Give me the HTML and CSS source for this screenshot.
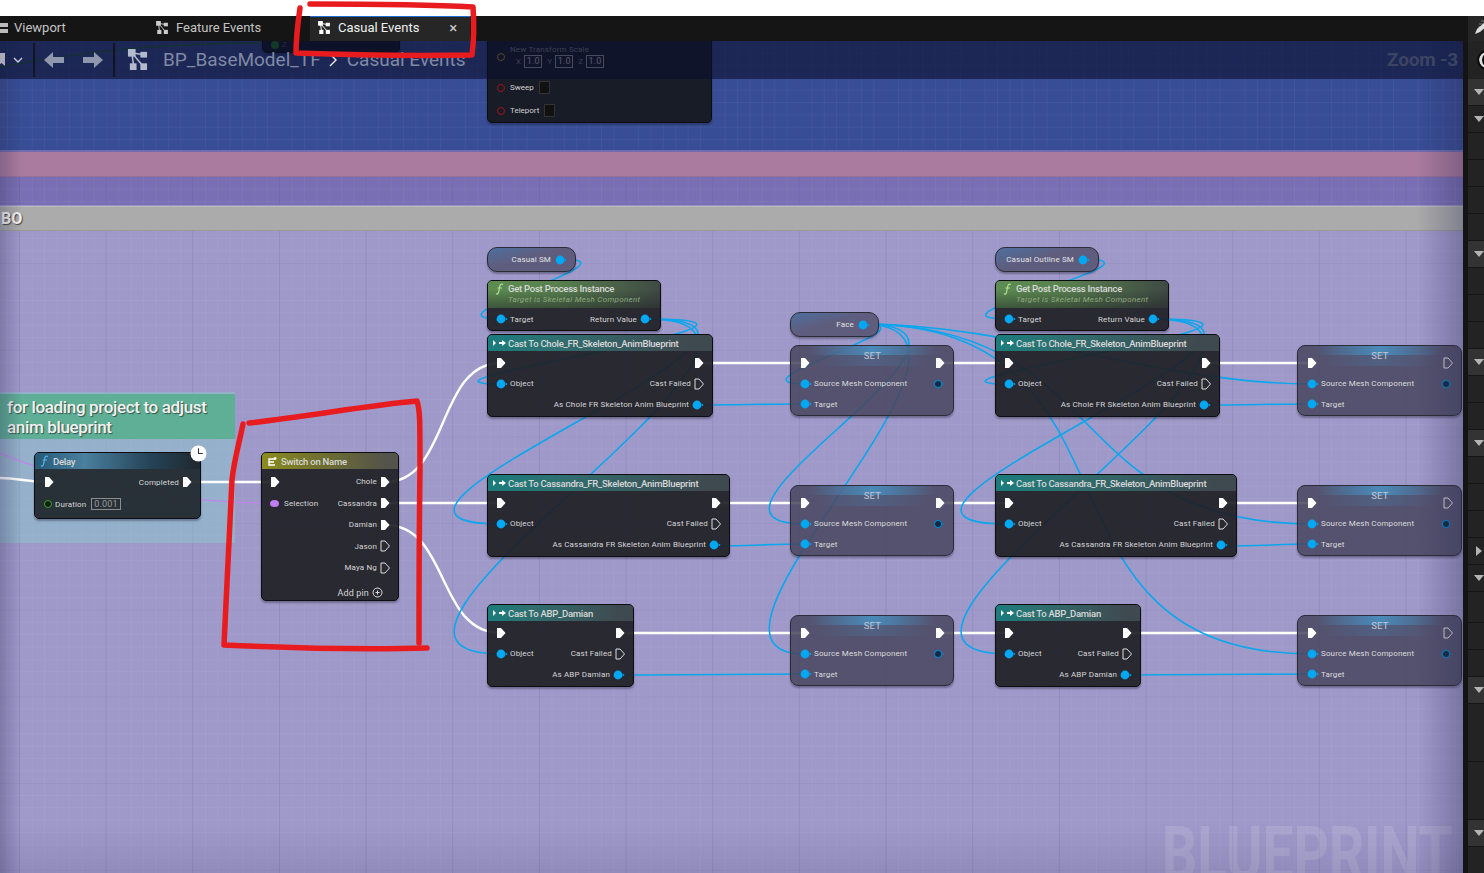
FILE: index.html
```html
<!DOCTYPE html>
<html>
<head>
    <title>BP_BaseModel_TF - Casual Events</title>
    <link rel="stylesheet" href="styles.css">
</head>
<body>
    <svg class="defs" width="0" height="0">
        <symbol id="exec" viewBox="0 0 10 12"><path d="M1 1H5L9.5 6L5 11H1Z" fill="#fff"/></symbol>
        <symbol id="exec-off" viewBox="0 0 10 12"><path d="M1 1H5L9.5 6L5 11H1Z" fill="none" stroke="#ddd" stroke-width="1"/></symbol>
        <symbol id="obj" viewBox="0 0 12 10"><circle cx="5" cy="5" r="4.4" fill="#00a8f4"/><path d="M9.6 3.6L11.6 5L9.6 6.4Z" fill="#00a8f4"/></symbol>
        <symbol id="obj-off" viewBox="0 0 12 10"><circle cx="5" cy="5" r="3.6" fill="#142a44" stroke="#0a80c0" stroke-width="1.2"/><path d="M9.6 3.8L11.4 5L9.6 6.2Z" fill="#0a80c0"/></symbol>
        <symbol id="graph" viewBox="0 0 22 22"><path d="M5 4L17 6M5 4L7 18M5 4L17 18" stroke="currentColor" stroke-width="1.6" fill="none"/><rect x="1" y="0" width="8" height="8" fill="currentColor"/><rect x="14" y="3" width="7" height="6" fill="currentColor"/><rect x="3" y="15" width="7" height="7" fill="currentColor"/><rect x="14" y="15" width="7" height="7" fill="currentColor"/></symbol>
        <symbol id="cast" viewBox="0 0 14 8"><path d="M0 1L3 4L0 7Z M6 3H9V1L13 4L9 7V5H6Z" fill="#fff"/></symbol>
        <symbol id="func" viewBox="0 0 10 12"><path d="M8 1.5C5.5 0.5 5 2 4.6 4L3.6 9C3.2 11 2.4 11.5 1 10.6M2.5 5H7" fill="none" stroke="currentColor" stroke-width="1.2"/></symbol>
    </svg>

    <div class="topstrip"></div>

    <div class="tabbar">
        <div class="tab tab-viewport">
            <svg class="tab-icon-view" width="8" height="12" viewBox="0 0 8 12"><rect y="1" width="8" height="4" fill="#bbb"/><rect y="7" width="8" height="4" fill="#bbb"/></svg>
            Viewport
        </div>
        <div class="tab tab-feature">
            <svg class="tab-icon"><use href="#graph"/></svg>
            Feature Events
        </div>
        <div class="tab tab-active">
            <svg class="tab-icon"><use href="#graph"/></svg>
            Casual Events
            <span class="tab-close">×</span>
        </div>
        <div class="tab-side">
            <svg width="16" height="15" viewBox="0 0 16 15"><path d="M5 4H16M7 1H16M4 7H10" stroke="#777" stroke-width="1"/><path d="M1 14L3 9L11 2L14 5L6 12Z" fill="#ddd"/></svg>
        </div>
    </div>

    <div class="main">
        <div class="graph">
            <div class="band band-blue gridded"></div>
            <div class="band band-pink"></div>
            <div class="band band-purple gridded"></div>
            <div class="band band-gray"><span class="band-label">BO</span></div>
            <div class="band band-lav gridded"></div>

            <div class="canvas">
                <div class="comment">
                    <div class="comment-head">for loading project to adjust anim blueprint</div>
                </div>

                <svg class="wires" width="1463" height="873" viewBox="0 0 1463 873">
                    <path class="w-green" d="M0 67C90 50 170 43 273 43"/>
                    <path class="w-purple" d="M0 453C70 482 170 503 274 503"/>

                    <g class="w-exec">
                        <path d="M0 478C18 478 28 482 45 482"/>
                        <path d="M187 482H274"/>
                        <path d="M385 482C450 482 436 363 501 363"/>
                        <path d="M385 503H501"/>
                        <path d="M385 525C450 525 436 633 501 633"/>
                        <path d="M699 363H805"/>
                        <path d="M939 363H1008"/>
                        <path d="M1207 363H1312"/>
                        <path d="M716 503H805"/>
                        <path d="M939 503H1008"/>
                        <path d="M1224 503H1312"/>
                        <path d="M620 633H805"/>
                        <path d="M939 633H1008"/>
                        <path d="M1128 633H1312"/>
                    </g>

                    <g class="w-obj">
                        <path d="M561 259C648 259 414 319 501 319"/>
                        <path d="M1082 259C1182 259 908 319 1008 319"/>

                        <path d="M647 319C847 319 371 384 501 384"/>
                        <path d="M647 319C867 319 291 524 501 524"/>
                        <path d="M647 319C867 319 291 654 501 654"/>

                        <path d="M1153 319C1353 319 878 384 1008 384"/>
                        <path d="M1153 319C1373 319 798 524 1008 524"/>
                        <path d="M1153 319C1373 319 798 654 1008 654"/>

                        <path d="M862 324C945 324 722 384 805 384"/>
                        <path d="M862 324C1037 324 655 524 805 524"/>
                        <path d="M862 324C1037 324 655 654 805 654"/>
                        <path d="M862 324C1012 324 1162 384 1312 384"/>
                        <path d="M862 324C1112 324 1062 524 1312 524"/>
                        <path d="M862 324C1162 324 1012 654 1312 654"/>

                        <path d="M697 405C740 405 760 404 805 404"/>
                        <path d="M714 546C750 546 770 544 805 544"/>
                        <path d="M619 675C680 675 740 674 805 674"/>
                        <path d="M1205 405C1250 405 1270 404 1312 404"/>
                        <path d="M1222 546C1260 546 1280 544 1312 544"/>
                        <path d="M1126 675C1190 675 1250 674 1312 674"/>
                    </g>
                </svg>

                <div class="node hidden-z">
                    <div class="row"><span class="dot-green"></span><span class="dim-label">Z</span></div>
                </div>

                <div class="node transform">
                    <div class="tf-label">New Transform Scale</div>
                    <div class="row tf-vec">
                        <span class="ring ring-gold"></span>
                        <span class="tf-axis">X</span><span class="tf-box">1.0</span>
                        <span class="tf-axis">Y</span><span class="tf-box">1.0</span>
                        <span class="tf-axis">Z</span><span class="tf-box">1.0</span>
                    </div>
                    <div class="row tf-row"><span class="ring ring-red"></span>Sweep<span class="check"></span></div>
                    <div class="row tf-row"><span class="ring ring-red"></span>Teleport<span class="check"></span></div>
                </div>

                <!-- delay -->
                <div class="node n-delay">
                    <div class="head head-delay"><svg class="fn-icon fn-blue"><use href="#func"/></svg>Delay</div>
                    <div class="rows">
                        <div class="row"><svg class="exec"><use href="#exec"/></svg><span class="push">Completed</span><svg class="exec"><use href="#exec"/></svg></div>
                        <div class="row"><span class="ring ring-green"></span>Duration<span class="numbox">0.001</span></div>
                    </div>
                    <span class="clock"><svg width="17" height="17" viewBox="0 0 16 16"><circle cx="8" cy="8" r="7.5" fill="#fff"/><path d="M8 3V8H12" fill="none" stroke="#333" stroke-width="1"/></svg></span>
                </div>

                <!-- switch -->
                <div class="node n-switch">
                    <div class="head head-switch"><svg class="sw-icon" width="11" height="11" viewBox="0 0 11 11"><path d="M8 3H2V9H8M2 6H7M8 1V4M6.5 2.5H9.5" fill="none" stroke="#fff" stroke-width="1.4"/></svg>Switch on Name</div>
                    <div class="rows">
                        <div class="row"><svg class="exec"><use href="#exec"/></svg><span class="push">Chole</span><svg class="exec"><use href="#exec"/></svg></div>
                        <div class="row"><span class="dot-purple"></span>Selection<span class="push">Cassandra</span><svg class="exec"><use href="#exec"/></svg></div>
                        <div class="row"><span class="push">Damian</span><svg class="exec"><use href="#exec"/></svg></div>
                        <div class="row"><span class="push">Jason</span><svg class="exec"><use href="#exec-off"/></svg></div>
                        <div class="row"><span class="push">Maya Ng</span><svg class="exec"><use href="#exec-off"/></svg></div>
                        <div class="row add-row"><span class="push">Add pin</span><svg width="11" height="11" viewBox="0 0 11 11"><circle cx="5.5" cy="5.5" r="4.5" fill="none" stroke="#ddd"/><path d="M3.5 5.5H7.5M5.5 3.5V7.5" stroke="#ddd"/></svg></div>
                    </div>
                </div>

                <!-- first column -->
                <div class="node var v-casual"><span>Casual SM</span><svg class="obj"><use href="#obj"/></svg></div>
                <div class="node post p-one">
                    <div class="head head-post"><svg class="fn-icon fn-green"><use href="#func"/></svg><div>Get Post Process Instance<div class="sub">Target is Skeletal Mesh Component</div></div></div>
                    <div class="row"><svg class="obj"><use href="#obj"/></svg>Target<span class="push">Return Value</span><svg class="obj"><use href="#obj"/></svg></div>
                </div>
                <div class="node cast c-chole">
                    <div class="head head-cast"><svg class="cast-icon"><use href="#cast"/></svg>Cast To Chole_FR_Skeleton_AnimBlueprint</div>
                    <div class="rows">
                        <div class="row"><svg class="exec"><use href="#exec"/></svg><svg class="exec push"><use href="#exec"/></svg></div>
                        <div class="row"><svg class="obj"><use href="#obj"/></svg>Object<span class="push">Cast Failed</span><svg class="exec"><use href="#exec-off"/></svg></div>
                        <div class="row"><span class="push">As Chole FR Skeleton Anim Blueprint</span><svg class="obj"><use href="#obj"/></svg></div>
                    </div>
                </div>
                <div class="node cast c-cass">
                    <div class="head head-cast"><svg class="cast-icon"><use href="#cast"/></svg>Cast To Cassandra_FR_Skeleton_AnimBlueprint</div>
                    <div class="rows">
                        <div class="row"><svg class="exec"><use href="#exec"/></svg><svg class="exec push"><use href="#exec"/></svg></div>
                        <div class="row"><svg class="obj"><use href="#obj"/></svg>Object<span class="push">Cast Failed</span><svg class="exec"><use href="#exec-off"/></svg></div>
                        <div class="row"><span class="push">As Cassandra FR Skeleton Anim Blueprint</span><svg class="obj"><use href="#obj"/></svg></div>
                    </div>
                </div>
                <div class="node cast c-dam">
                    <div class="head head-cast"><svg class="cast-icon"><use href="#cast"/></svg>Cast To ABP_Damian</div>
                    <div class="rows">
                        <div class="row"><svg class="exec"><use href="#exec"/></svg><svg class="exec push"><use href="#exec"/></svg></div>
                        <div class="row"><svg class="obj"><use href="#obj"/></svg>Object<span class="push">Cast Failed</span><svg class="exec"><use href="#exec-off"/></svg></div>
                        <div class="row"><span class="push">As ABP Damian</span><svg class="obj"><use href="#obj"/></svg></div>
                    </div>
                </div>

                <!-- face + first sets -->
                <div class="node var v-face"><span>Face</span><svg class="obj"><use href="#obj"/></svg></div>
                <div class="node set s-a1">
                    <div class="row"><svg class="exec"><use href="#exec"/></svg><span class="set-title">SET</span><svg class="exec"><use href="#exec"/></svg></div>
                    <div class="row"><svg class="obj"><use href="#obj"/></svg>Source Mesh Component<svg class="obj push"><use href="#obj-off"/></svg></div>
                    <div class="row"><svg class="obj"><use href="#obj"/></svg>Target</div>
                </div>
                <div class="node set s-a2">
                    <div class="row"><svg class="exec"><use href="#exec"/></svg><span class="set-title">SET</span><svg class="exec"><use href="#exec"/></svg></div>
                    <div class="row"><svg class="obj"><use href="#obj"/></svg>Source Mesh Component<svg class="obj push"><use href="#obj-off"/></svg></div>
                    <div class="row"><svg class="obj"><use href="#obj"/></svg>Target</div>
                </div>
                <div class="node set s-a3">
                    <div class="row"><svg class="exec"><use href="#exec"/></svg><span class="set-title">SET</span><svg class="exec"><use href="#exec"/></svg></div>
                    <div class="row"><svg class="obj"><use href="#obj"/></svg>Source Mesh Component<svg class="obj push"><use href="#obj-off"/></svg></div>
                    <div class="row"><svg class="obj"><use href="#obj"/></svg>Target</div>
                </div>

                <!-- second column -->
                <div class="node var v-outline"><span>Casual Outline SM</span><svg class="obj"><use href="#obj"/></svg></div>
                <div class="node post p-two">
                    <div class="head head-post"><svg class="fn-icon fn-green"><use href="#func"/></svg><div>Get Post Process Instance<div class="sub">Target is Skeletal Mesh Component</div></div></div>
                    <div class="row"><svg class="obj"><use href="#obj"/></svg>Target<span class="push">Return Value</span><svg class="obj"><use href="#obj"/></svg></div>
                </div>
                <div class="node cast c-chole2">
                    <div class="head head-cast"><svg class="cast-icon"><use href="#cast"/></svg>Cast To Chole_FR_Skeleton_AnimBlueprint</div>
                    <div class="rows">
                        <div class="row"><svg class="exec"><use href="#exec"/></svg><svg class="exec push"><use href="#exec"/></svg></div>
                        <div class="row"><svg class="obj"><use href="#obj"/></svg>Object<span class="push">Cast Failed</span><svg class="exec"><use href="#exec-off"/></svg></div>
                        <div class="row"><span class="push">As Chole FR Skeleton Anim Blueprint</span><svg class="obj"><use href="#obj"/></svg></div>
                    </div>
                </div>
                <div class="node cast c-cass2">
                    <div class="head head-cast"><svg class="cast-icon"><use href="#cast"/></svg>Cast To Cassandra_FR_Skeleton_AnimBlueprint</div>
                    <div class="rows">
                        <div class="row"><svg class="exec"><use href="#exec"/></svg><svg class="exec push"><use href="#exec"/></svg></div>
                        <div class="row"><svg class="obj"><use href="#obj"/></svg>Object<span class="push">Cast Failed</span><svg class="exec"><use href="#exec-off"/></svg></div>
                        <div class="row"><span class="push">As Cassandra FR Skeleton Anim Blueprint</span><svg class="obj"><use href="#obj"/></svg></div>
                    </div>
                </div>
                <div class="node cast c-dam2">
                    <div class="head head-cast"><svg class="cast-icon"><use href="#cast"/></svg>Cast To ABP_Damian</div>
                    <div class="rows">
                        <div class="row"><svg class="exec"><use href="#exec"/></svg><svg class="exec push"><use href="#exec"/></svg></div>
                        <div class="row"><svg class="obj"><use href="#obj"/></svg>Object<span class="push">Cast Failed</span><svg class="exec"><use href="#exec-off"/></svg></div>
                        <div class="row"><span class="push">As ABP Damian</span><svg class="obj"><use href="#obj"/></svg></div>
                    </div>
                </div>

                <div class="node set s-b1">
                    <div class="row"><svg class="exec"><use href="#exec"/></svg><span class="set-title">SET</span><svg class="exec"><use href="#exec-off"/></svg></div>
                    <div class="row"><svg class="obj"><use href="#obj"/></svg>Source Mesh Component<svg class="obj push"><use href="#obj-off"/></svg></div>
                    <div class="row"><svg class="obj"><use href="#obj"/></svg>Target</div>
                </div>
                <div class="node set s-b2">
                    <div class="row"><svg class="exec"><use href="#exec"/></svg><span class="set-title">SET</span><svg class="exec"><use href="#exec-off"/></svg></div>
                    <div class="row"><svg class="obj"><use href="#obj"/></svg>Source Mesh Component<svg class="obj push"><use href="#obj-off"/></svg></div>
                    <div class="row"><svg class="obj"><use href="#obj"/></svg>Target</div>
                </div>
                <div class="node set s-b3">
                    <div class="row"><svg class="exec"><use href="#exec"/></svg><span class="set-title">SET</span><svg class="exec"><use href="#exec-off"/></svg></div>
                    <div class="row"><svg class="obj"><use href="#obj"/></svg>Source Mesh Component<svg class="obj push"><use href="#obj-off"/></svg></div>
                    <div class="row"><svg class="obj"><use href="#obj"/></svg>Target</div>
                </div>

                <div class="watermark">BLUEPRINT</div>
            </div>

            <div class="vignette"></div>

            <div class="toolbar">
                <svg class="bookmark" width="8" height="13" viewBox="0 0 8 13"><path d="M0 0H7V13L3.5 10L0 13Z" fill="#aab"/></svg>
                <svg class="chev" width="10" height="6" viewBox="0 0 10 6"><path d="M1 1L5 5L9 1" fill="none" stroke="#ccd" stroke-width="1.4"/></svg>
                <span class="tool-sep"></span>
                <svg class="arrow-l" width="20" height="16" viewBox="0 0 20 16"><path d="M0 8L9 0V5H20V11H9V16Z" fill="#8f97ad"/></svg>
                <svg class="arrow-r" width="20" height="16" viewBox="0 0 20 16"><path d="M20 8L11 0V5H0V11H11V16Z" fill="#8f97ad"/></svg>
                <span class="tool-sep"></span>
                <svg class="crumb-icon"><use href="#graph"/></svg>
                <span class="crumb">BP_BaseModel_TF</span>
                <svg class="crumb-sep" width="8" height="14" viewBox="0 0 8 14"><path d="M1 1L7 7L1 13" fill="none" stroke="#eee" stroke-width="1.4"/></svg>
                <span class="crumb">Casual Events</span>
                <span class="zoom-label">Zoom -3</span>
            </div>
        </div>

        <div class="gutter"></div>

        <div class="sidebar">
            <div class="side-circle"><span></span></div>
            <div class="side-row on"><i class="tri"></i></div>
            <div class="side-row"><i class="tri"></i></div>
            <div class="side-row"></div>
            <div class="side-row"></div>
            <div class="side-row"></div>
            <div class="side-row"></div>
            <div class="side-row on"><i class="tri"></i></div>
            <div class="side-row"></div>
            <div class="side-row"></div>
            <div class="side-row"></div>
            <div class="side-row on"><i class="tri"></i></div>
            <div class="side-row"></div>
            <div class="side-row"></div>
            <div class="side-row on"><i class="tri"></i></div>
            <div class="side-row"></div>
            <div class="side-row"></div>
            <div class="side-row"></div>
            <div class="side-row"><i class="tri-r"></i></div>
            <div class="side-row"><i class="tri"></i></div>
            <div class="side-row tall-a"></div>
            <div class="side-row"></div>
            <div class="side-row"></div>
            <div class="side-row on"><i class="tri"></i></div>
            <div class="side-row tall-b"></div>
            <div class="side-row tall-b"></div>
            <div class="side-row on"><i class="tri"></i></div>
            <div class="side-row"></div>
        </div>
    </div>

    <!-- red marker scribbled on top of the screenshot -->
    <svg class="marker" width="1484" height="873" viewBox="0 0 1484 873">
        <path d="M300 8C298 22 296 40 296 53C350 55 420 56 472 55C474 40 474 22 473 7C420 4 360 4 310 4"/>
        <path d="M249 423C310 416 370 405 417 401C420 410 420 420 420 470C419 540 419 600 419 643"/>
        <path d="M427 648C360 650 290 648 224 645C226 600 229 540 232 480C234 460 240 440 243 424"/>
    </svg>
</body>
</html>
```

FILE: styles.css
```css
* {
    box-sizing: border-box;
}

html, body {
    margin: 0;
    height: 100%;
    overflow: hidden;
}

body {
    font-family: Roboto, "Liberation Sans", sans-serif;
    background-color: #fff;
    display: flex;
    flex-direction: column;
    position: relative;
}

.defs {
    position: absolute;
}

.topstrip {
    height: 16px;
    background-color: #fff;
    flex: none;
}

/* tabs */
.tabbar {
    height: 25px;
    flex: none;
    background-color: #151515;
    display: flex;
    color: #c4c4c4;
    font-size: 13px;
    position: relative;
    z-index: 3;
}

.tab {
    display: flex;
    align-items: center;
    height: 25px;
    padding-bottom: 2px;
}

.tab-viewport {
    width: 155px;
    gap: 6px;
}

.tab-feature {
    width: 155px;
    gap: 7px;
}

.tab-icon {
    width: 14px;
    height: 13px;
    color: #ccc;
}

.tab-icon-view {
    flex: none;
}

.tab-active {
    width: 160px;
    padding-left: 7px;
    padding-bottom: 3px;
    gap: 7px;
    background-color: #262626;
    color: #f0f0f0;
    border-top: 1px solid #1b6fd0;
}

.tab-active .tab-icon {
    color: #fff;
}

.tab-close {
    margin-left: 23px;
    font-size: 15px;
    color: #ccc;
}

.tab-side {
    margin-left: auto;
    width: 16px;
    background-color: #262626;
    padding: 4px 0 0 6px;
    overflow: hidden;
    display: flex;
}

.tab-side svg {
    flex: none;
}

/* main area */
.main {
    flex: 1;
    display: flex;
    min-height: 0;
}

.graph {
    width: 1463px;
    flex: none;
    position: relative;
    overflow: hidden;
    display: flex;
    flex-direction: column;
}

.gutter {
    width: 5px;
    flex: none;
    background-color: #141414;
}

.band {
    flex: none;
}

.gridded {
    background-attachment: fixed;
    background-size: 86.67px 86.67px, 86.67px 86.67px, 12.38px 12.38px, 12.38px 12.38px;
    background-position: 19px 0, 0 3px, 7px 0, 0 3px;
    background-image:
        linear-gradient(90deg, rgba(30, 30, 100, .12) 1px, transparent 1px),
        linear-gradient(rgba(30, 30, 100, .07) 1px, transparent 1px),
        linear-gradient(90deg, rgba(255, 255, 255, .04) 1px, transparent 1px),
        linear-gradient(rgba(255, 255, 255, .04) 1px, transparent 1px);
}

.band-blue {
    height: 111px;
    background-color: #374d96;
    border-bottom: 2px solid #6f6cb0;
}

.band-pink {
    height: 25px;
    background-color: #aa7b9e;
    border-bottom: 1px solid #9a6f95;
}

.band-purple {
    height: 29px;
    background-color: #796fb4;
    border-bottom: 1px solid #9791c8;
}

.band-gray {
    height: 25px;
    background-color: #ababab;
    border-top: 1px solid #bbb;
    border-bottom: 1px solid #999;
    color: #f5f5f5;
    font-size: 16px;
    font-weight: 700;
    line-height: 24px;
    text-shadow: 1px 1px 1px #444;
}

.band-label {
    margin-left: 1px;
}

.band-lav {
    flex: 1;
    background-color: #9f99c9;
}

/* everything on the canvas uses window coordinates */
.canvas {
    position: absolute;
    left: 0;
    top: -41px;
    width: 1463px;
    height: 873px;
}

.vignette {
    position: absolute;
    inset: 0;
    pointer-events: none;
    background:
        linear-gradient(90deg, rgba(40, 40, 80, .28), transparent 22px),
        linear-gradient(270deg, rgba(40, 40, 80, .32), transparent 46px),
        linear-gradient(0deg, rgba(40, 40, 80, .12), transparent 50px);
}

.comment {
    position: absolute;
    left: 0;
    top: 392px;
    width: 235px;
    height: 151px;
    background-color: rgba(140, 200, 205, .5);
}

.comment-head {
    margin-top: 2px;
    height: 45px;
    padding: 3px 7px;
    background-color: #5fae96;
    color: #f2f2f2;
    font-size: 17px;
    font-weight: 500;
    letter-spacing: -.35px;
    line-height: 20px;
    text-shadow: 1px 1px 1px #33554a;
}

.wires {
    position: absolute;
    left: 0;
    top: 0;
    fill: none;
}

.w-green {
    stroke: #1f6a2e;
    stroke-width: 1.5;
}

.w-purple {
    stroke: #c184ee;
    stroke-width: 1.2;
}

.w-exec {
    stroke: #fff;
    stroke-width: 2.4;
}

.w-obj {
    stroke: #0aa6ee;
    stroke-width: 1.6;
}

/* nodes */
.node {
    position: absolute;
    border-radius: 5px;
    border: 1px solid #0d0d10;
    background-color: rgba(30, 31, 37, .92);
    box-shadow: 0 2px 2px rgba(20, 20, 40, .35);
    color: #d6d6d6;
    font-size: 8px;
    letter-spacing: .15px;
}

.head {
    display: flex;
    align-items: center;
    height: 16px;
    padding-left: 5px;
    border-radius: 4px 4px 0 0;
    font-size: 9.5px;
    font-weight: 500;
    letter-spacing: -.25px;
    color: #d8d8d8;
}

.rows {
    padding-top: 1px;
}

.row {
    display: flex;
    align-items: center;
    height: 21px;
    padding: 0 8px;
    gap: 3px;
}

.row > .obj:first-child {
    margin-right: -1px;
}

.push {
    margin-left: auto;
}

.exec {
    width: 10px;
    height: 12px;
    flex: none;
}

.obj {
    width: 12px;
    height: 10px;
    flex: none;
}

.cast-icon {
    width: 14px;
    height: 8px;
    margin-right: 1px;
    flex: none;
}

.head-cast {
    background: linear-gradient(90deg, #1a7d7c, #2f6f70 30%, #3f4a50 90%), #333;
}

.fn-icon {
    width: 10px;
    height: 12px;
    margin-right: 3px;
    flex: none;
}

.fn-blue {
    color: #5bb4ea;
}

.fn-green {
    color: #b3e09a;
}

.head-delay {
    background: linear-gradient(90deg, #245a78, #4a7f9e 30%, #254357 70%, #1f272e);
}

.head-switch {
    background: linear-gradient(90deg, #8c8c1f, #77772a 30%, #54544a 90%);
}

.sw-icon {
    margin-right: 3px;
}

.head-post {
    height: 27px;
    align-items: flex-start;
    padding: 2px 0 0 7px;
    background: linear-gradient(rgba(30, 31, 37, 0) 30%, rgba(30, 31, 37, .5)), linear-gradient(90deg, #5d8d52, #58804e 40%, #3f4a44);
    line-height: 12px;
}

.sub {
    color: #8ea87f;
    font-size: 8px;
    font-style: italic;
    font-weight: 400;
    letter-spacing: .3px;
    line-height: 10px;
}

.post .row {
    height: 22px;
}

.n-delay {
    left: 34px;
    top: 452px;
    width: 167px;
    height: 67px;
    background-color: rgba(36, 44, 50, .96);
}

.n-delay .rows {
    padding-top: 2px;
}

.n-delay .row {
    padding-left: 9px;
    height: 22px;
}

.ring {
    width: 8px;
    height: 8px;
    border-radius: 50%;
    border: 1.5px solid;
    flex: none;
}

.ring-green {
    border-color: #2fb018;
    background-color: #101a10;
}

.ring-gold {
    border-color: #c0a010;
}

.ring-red {
    border-color: #a01218;
}

.numbox {
    border: 1px solid #8d8d8d;
    margin-left: 2px;
    padding: 0 2px;
    font-size: 9px;
    line-height: 10px;
    color: #9a9a9a;
}

.clock {
    position: absolute;
    right: -7px;
    top: -8px;
    display: flex;
}

.n-switch {
    left: 261px;
    top: 452px;
    width: 138px;
    height: 149px;
}

.n-switch .rows {
    padding-top: 2px;
}

.n-switch .row {
    height: 21.5px;
}

.n-switch .add-row {
    height: 28px;
    padding-right: 15px;
    font-size: 9px;
}

.dot-purple {
    width: 9px;
    height: 7px;
    border-radius: 50%;
    background-color: #c27df0;
    flex: none;
    margin-right: 2px;
}

.var {
    height: 25px;
    display: flex;
    align-items: center;
    justify-content: flex-end;
    gap: 4px;
    padding-right: 8px;
    border-radius: 10px;
    border: 1.5px solid #2c2c36;
    background: linear-gradient(165deg, rgba(60, 130, 190, .5), transparent 45%), #5f5d7e;
    color: #e2e2e2;
}

.v-casual {
    left: 487px;
    top: 247px;
    width: 89px;
}

.v-face {
    left: 790px;
    top: 312px;
    width: 89px;
}

.v-outline {
    left: 995px;
    top: 247px;
    width: 104px;
}

.post {
    width: 174px;
    height: 51px;
}

.p-one {
    left: 487px;
    top: 280px;
}

.p-two {
    left: 995px;
    top: 280px;
}

.cast {
    height: 83px;
}

.c-chole {
    left: 487px;
    top: 334px;
    width: 226px;
}

.c-cass {
    left: 487px;
    top: 474px;
    width: 243px;
}

.c-dam {
    left: 487px;
    top: 604px;
    width: 147px;
}

.c-chole2 {
    left: 995px;
    top: 334px;
    width: 225px;
}

.c-cass2 {
    left: 995px;
    top: 474px;
    width: 242px;
}

.c-dam2 {
    left: 995px;
    top: 604px;
    width: 146px;
}

.set {
    width: 164px;
    height: 71px;
    padding-top: 6px;
    border: 1.5px solid #2c2c38;
    border-radius: 8px;
    background:
        linear-gradient(90deg, transparent 10%, rgba(70, 160, 215, .65) 50%, transparent 90%) top / 100% 9px no-repeat,
        linear-gradient(90deg, transparent 15%, rgba(70, 140, 190, .25) 50%, transparent 85%) top / 100% 20px no-repeat,
        rgba(72, 70, 94, .86);
}

.set .row {
    height: 20.5px;
    padding: 0 8px 0 9px;
    color: #dcdcdc;
}

.set .row:first-child {
    height: 21.5px;
}

.set-title {
    margin: 0 auto 14px;
    font-size: 9.5px;
    color: #c6c6d2;
    letter-spacing: .3px;
}

.s-a1 { left: 790px; top: 345px; }
.s-a2 { left: 790px; top: 485px; }
.s-a3 { left: 790px; top: 615px; }
.s-b1 { left: 1297px; top: 345px; width: 165px; }
.s-b2 { left: 1297px; top: 485px; width: 165px; }
.s-b3 { left: 1297px; top: 615px; width: 165px; }

/* half hidden nodes under the toolbar */
.hidden-z {
    left: 262px;
    top: 20px;
    width: 138px;
    height: 33px;
    background-color: #14161d;
    padding-top: 13px;
}

.dot-green {
    width: 8px;
    height: 8px;
    border-radius: 50%;
    background-color: #1d7a1d;
}

.dim-label {
    color: #555;
}

.transform {
    left: 487px;
    top: 20px;
    width: 225px;
    height: 103px;
    background-color: #181c26;
    padding-top: 24px;
    color: #cfcfcf;
}

.tf-label {
    padding-left: 22px;
    height: 9px;
    line-height: 9px;
    color: #8a8a8a;
}

.tf-vec {
    padding-left: 9px;
    gap: 3px;
    height: 14px;
    margin-bottom: 8px;
    color: #8a8a8a;
}

.tf-vec .ring {
    margin-right: 8px;
    margin-top: -8px;
}

.tf-box {
    border: 1px solid #aaa;
    width: 18px;
    margin-right: 2px;
    text-align: center;
    font-size: 9px;
    line-height: 11px;
    color: #ccc;
}

.tf-row {
    height: 23px;
    padding-left: 9px;
    gap: 5px;
    letter-spacing: 0;
}

.check {
    width: 11px;
    height: 13px;
    border: 1px solid #333;
    background-color: #111;
    margin-left: 0;
}

.watermark {
    position: absolute;
    left: 1162px;
    top: 814px;
    font-size: 74px;
    font-weight: 700;
    line-height: 80px;
    color: rgba(255, 255, 255, .13);
    transform: scaleX(.745);
    transform-origin: left top;
    white-space: nowrap;
}

/* breadcrumb bar */
.toolbar {
    position: absolute;
    left: 0;
    top: 0;
    right: 0;
    height: 38px;
    padding-bottom: 1px;
    display: flex;
    align-items: center;
    background-color: rgba(12, 16, 46, .62);
    color: #8089a5;
    font-size: 19px;
}

.bookmark {
    margin-left: -2px;
}

.chev {
    margin-left: 7px;
}

.tool-sep {
    width: 2px;
    height: 34px;
    background-color: #111522;
}

.toolbar .chev + .tool-sep {
    margin-left: 10px;
}

.arrow-l {
    margin-left: 9px;
}

.arrow-r {
    margin-left: 19px;
    margin-right: 10px;
}

.crumb-icon {
    width: 21px;
    height: 21px;
    margin-left: 12px;
    margin-right: 15px;
    color: #b3bace;
}

.crumb-sep {
    margin: 0 10px 0 8px;
}

.zoom-label {
    margin-left: auto;
    margin-right: 5px;
    font-weight: 700;
    letter-spacing: -.2px;
    color: #3d4463;
}

/* right panel strip */
.sidebar {
    flex: 1;
    display: flex;
    flex-direction: column;
    background-color: #232323;
    overflow: hidden;
}

.side-circle {
    height: 38px;
    flex: none;
    position: relative;
}

.side-circle span {
    position: absolute;
    left: 9px;
    top: 9px;
    width: 20px;
    height: 20px;
    border-radius: 50%;
    background-color: #0c0c0c;
    border: 2px solid #0c0c0c;
    box-shadow: inset 3px 0 0 0 #ddd;
}

.side-row {
    height: 27px;
    flex: none;
    border-bottom: 1px solid #161616;
    display: flex;
    align-items: center;
    padding-left: 6px;
}

.side-row.on {
    background-color: #333;
}

.tall-a {
    height: 31px;
}

.tall-b {
    height: 58px;
}

.tri {
    width: 0;
    height: 0;
    border-left: 5px solid transparent;
    border-right: 5px solid transparent;
    border-top: 6px solid #b4b4b4;
}

.tri-r {
    width: 0;
    height: 0;
    margin-left: 2px;
    border-top: 5px solid transparent;
    border-bottom: 5px solid transparent;
    border-left: 6px solid #b4b4b4;
}

.marker {
    position: absolute;
    left: 0;
    top: 0;
    z-index: 5;
    fill: none;
    stroke: #e81c1f;
    stroke-width: 5.5;
    stroke-linecap: round;
    stroke-linejoin: round;
    pointer-events: none;
}
```
